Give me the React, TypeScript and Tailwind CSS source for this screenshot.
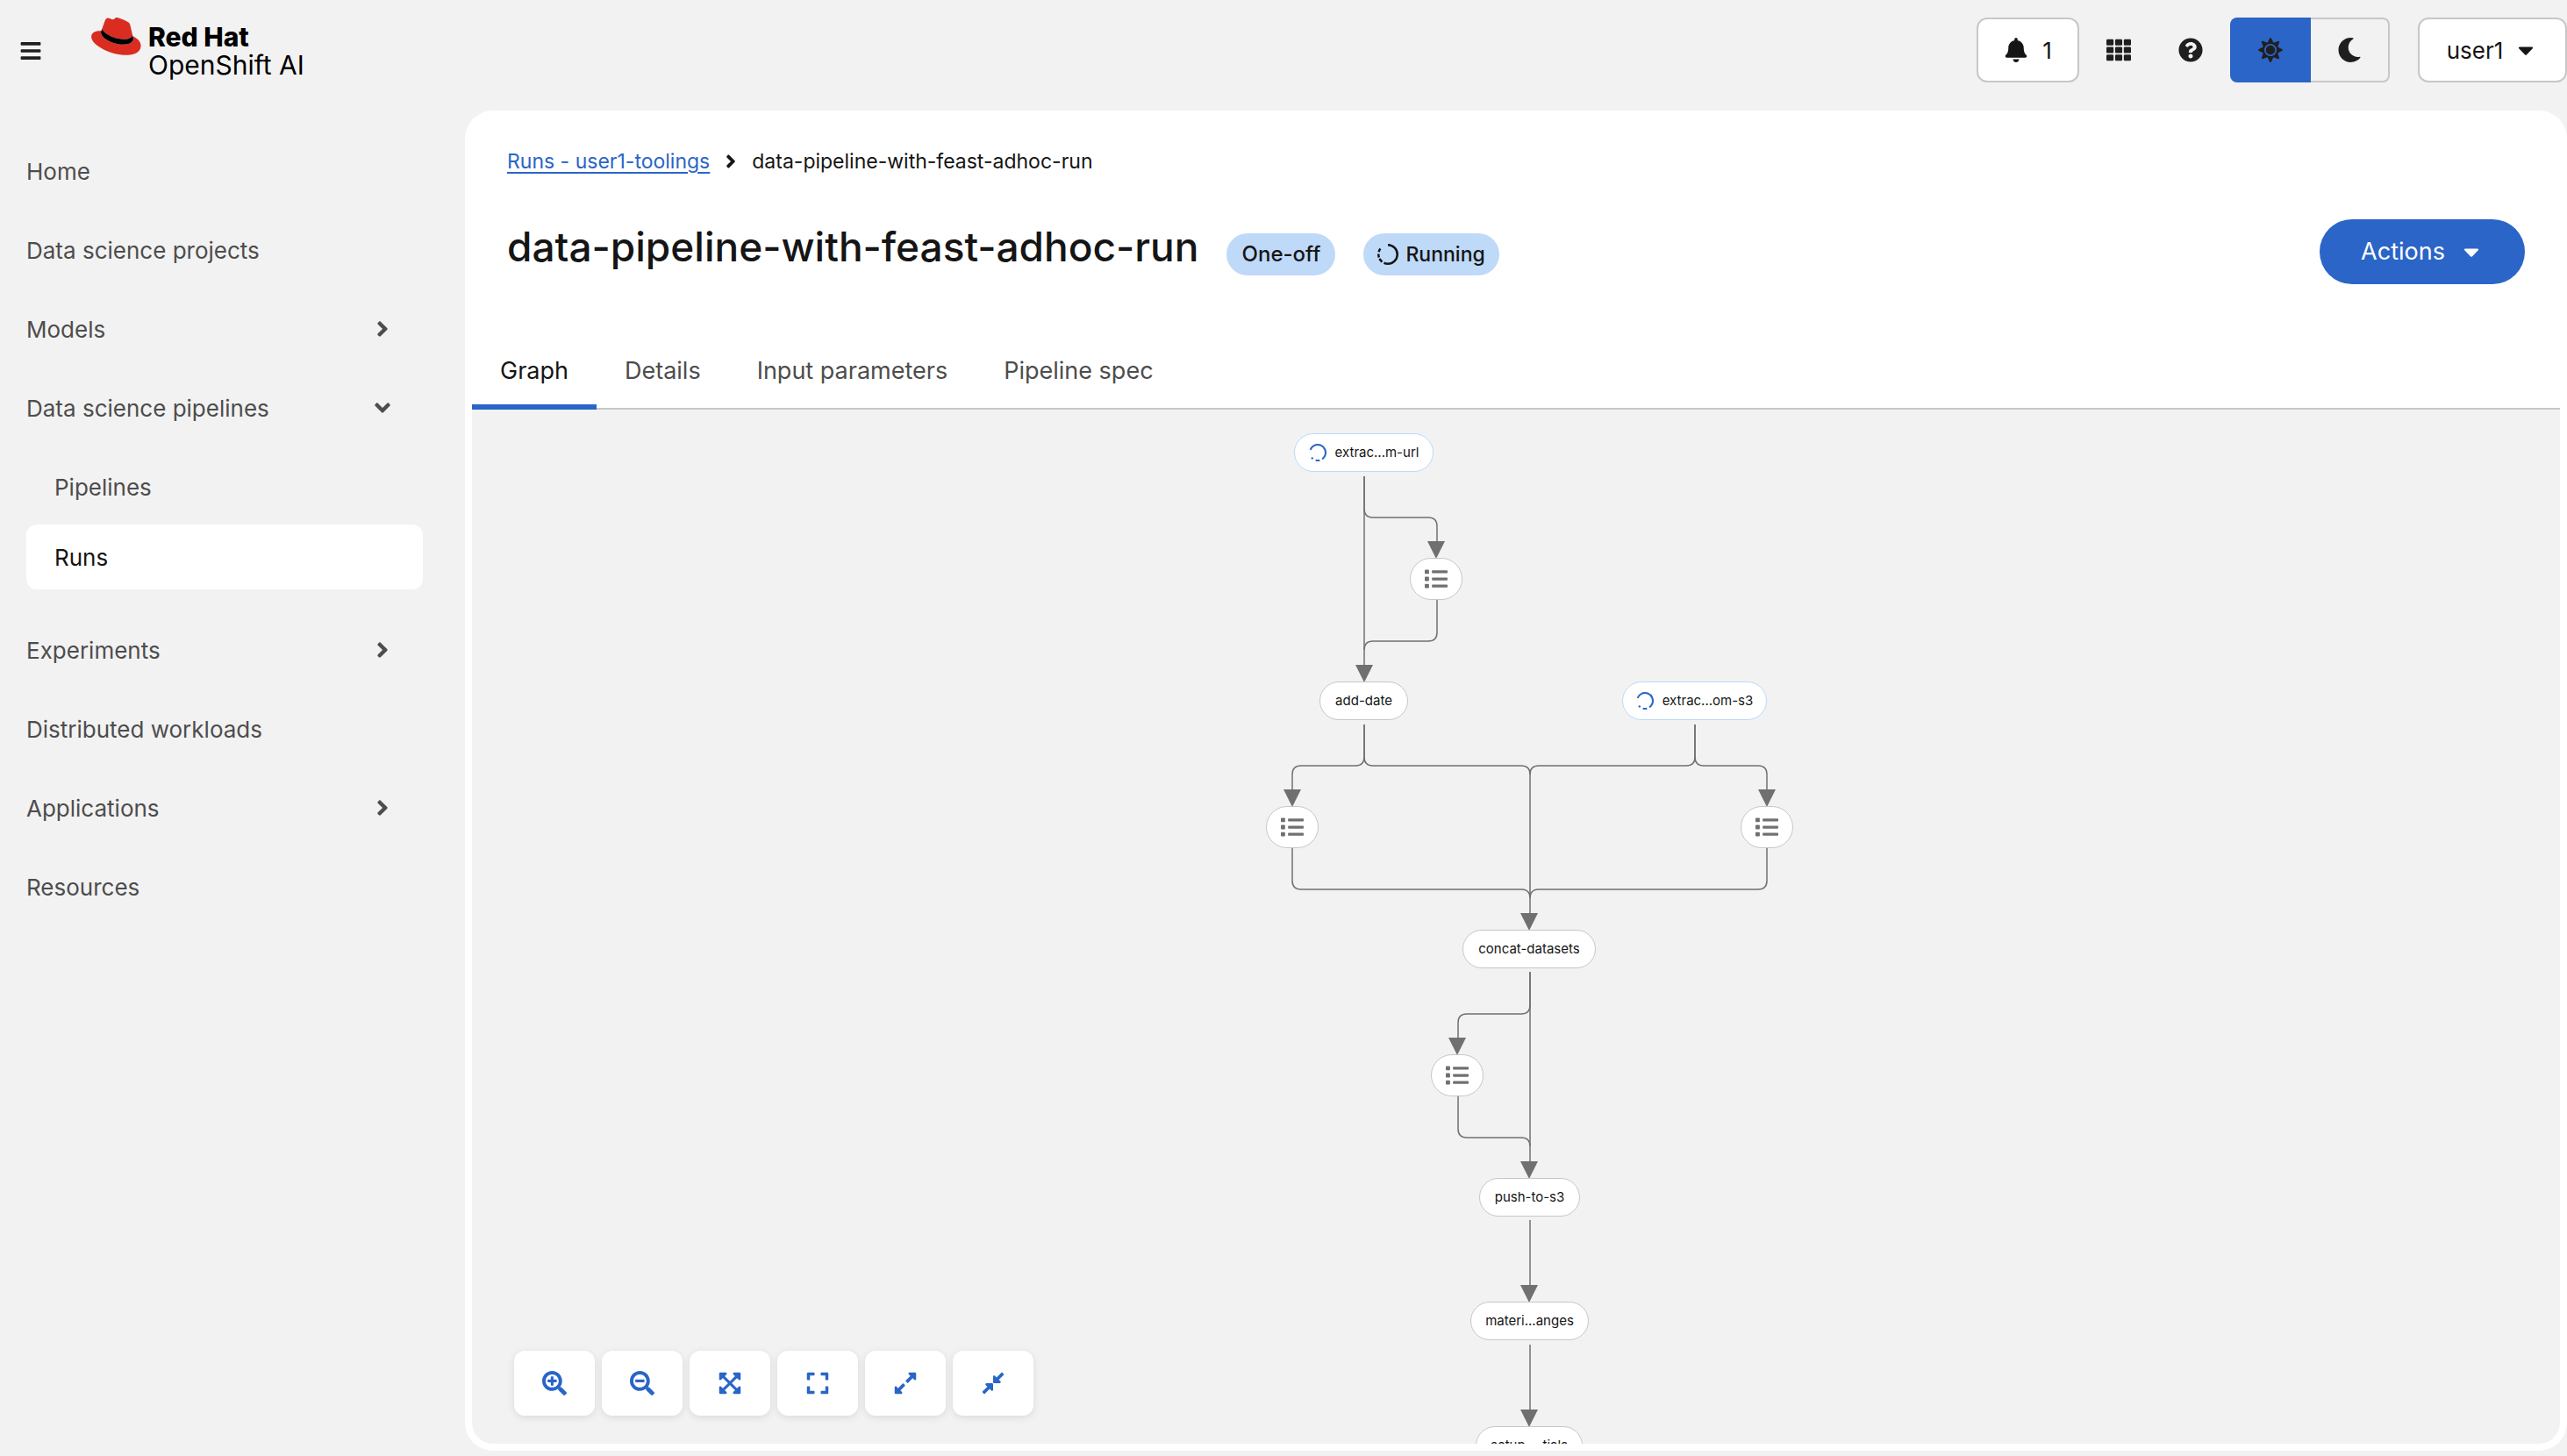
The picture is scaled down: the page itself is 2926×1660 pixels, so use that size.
import type { ReactNode } from 'react';
import {
  FaAngleDown,
  FaAngleRight,
  FaBars,
  FaBell,
  FaCaretDown,
  FaCompressAlt,
  FaExpand,
  FaExpandAlt,
  FaExpandArrowsAlt,
  FaList,
  FaMoon,
  FaQuestionCircle,
  FaSearchMinus,
  FaSearchPlus,
  FaSun,
  FaTh,
} from 'react-icons/fa';

function HatLogo() {
  return (
    <svg viewBox="0 7 192 145" className="h-[43px] w-[57px]" aria-hidden="true">
      <path
        fill="#da2c20"
        d="M127 90.2c12.5 0 30.6-2.6 30.6-17.5 0-1.2 0-2.3-.3-3.4l-7.4-32.4c-1.7-7.1-3.2-10.3-15.7-16.6-9.7-5-30.8-13.1-37.1-13.1-5.8 0-7.5 7.5-14.4 7.5-6.7 0-11.6-5.6-17.9-5.6-6 0-9.9 4.1-12.9 12.5 0 0-8.4 23.7-9.5 27.2-.2.6-.3 1.3-.2 1.9C42.2 59.9 78.6 90.2 127 90.2M159.6 78.9c1.7 8.2 1.7 9 1.7 10.1 0 14-15.7 21.8-36.4 21.8-46.8 0-87.7-27.4-87.7-45.5 0-2.8.6-5.4 1.5-7.3C21.900 58.800 .2 61.800 .2 81c0 31.5 74.6 70.3 133.6 70.3 45.3 0 56.7-20.5 56.7-36.7 0-12.700-11-27.200-30.900-35.800z"
      />
      <path
        fill="#000"
        d="M159.6 78.9c1.7 8.2 1.7 9 1.7 10.1 0 14-15.7 21.8-36.4 21.8-46.8 0-87.7-27.4-87.7-45.5 0-2.8.6-5.4 1.5-7.3l3.7-9.1c-.1.3-.2 1.2-.2 2 0 9.200 36.300 39.400 84.700 39.400 12.500 0 30.600-2.600 30.600-17.500 0-1.200 0-2.300-.3-3.400z"
      />
    </svg>
  );
}

/* Ring with a long arc and short trailing dashes; pathLength is 360 so dashes read as degrees. */
function ProgressRing({ className, dashes, turn }: { className: string; dashes: string; turn: number }) {
  return (
    <svg viewBox="0 0 24 24" className={className} aria-hidden="true">
      <circle
        cx="12"
        cy="12"
        r="10.750"
        fill="none"
        stroke="currentColor"
        strokeWidth="2.500"
        pathLength={360}
        strokeDasharray={dashes}
        transform={`rotate(${turn} 12 12)`}
      />
    </svg>
  );
}

function Masthead() {
  return (
    <header className="flex items-start justify-between pt-5 pb-8">
      <div className="flex items-start">
        <button type="button" aria-label="Global navigation" className="mt-6 ml-[22px] flex size-7 items-center text-[#1f1f1f]">
          <FaBars className="size-[26px]" />
        </button>
        <a href="#home" aria-label="Red Hat OpenShift AI" className="ml-[54px] flex items-start gap-2 text-black">
          <HatLogo />
          <span className="mt-[6px] flex flex-col text-[30px] leading-8">
            <span className="font-extrabold">Red Hat</span>
            <span>OpenShift AI</span>
          </span>
        </a>
      </div>
      <div className="flex items-center text-[#1f1f1f]">
        <button
          type="button"
          aria-label="1 notification"
          className="flex h-[74px] w-[117px] items-center justify-center gap-4 rounded-xl border-2 border-[#c7c7c7] bg-white text-[26px] text-[#151515]"
        >
          <FaBell className="size-7" />1
        </button>
        <button type="button" aria-label="Applications" className="ml-[31px] flex size-7 items-center justify-center">
          <FaTh className="size-7" />
        </button>
        <button type="button" aria-label="Help" className="ml-[54px] flex size-7 items-center justify-center">
          <FaQuestionCircle className="size-7" />
        </button>
        <div role="group" aria-label="Theme" className="ml-[31px] flex h-[74px]">
          <button type="button" aria-label="Light theme" aria-pressed="true" className="flex w-[92px] items-center justify-center rounded-l-lg bg-[#2a65c7]">
            <FaSun className="size-7" />
          </button>
          <button
            type="button"
            aria-label="Dark theme"
            aria-pressed="false"
            className="flex w-[90px] items-center justify-center rounded-r-lg border-2 border-l-0 border-[#c7c7c7]"
          >
            <FaMoon className="size-7" />
          </button>
        </div>
        <button
          type="button"
          className="ml-8 flex h-[74px] w-[170px] items-center justify-center gap-3 rounded-xl border-2 border-[#c7c7c7] bg-white text-[26px] text-[#151515]"
        >
          user1
          <FaCaretDown className="size-7" />
        </button>
      </div>
    </header>
  );
}

function NavLink({ children }: { children: ReactNode }) {
  return (
    <li>
      <a href="#nav" className="flex h-[74px] items-center">
        {children}
      </a>
    </li>
  );
}

function NavToggle({ label, open = false, children }: { label: string; open?: boolean; children?: ReactNode }) {
  return (
    <li>
      <button type="button" aria-expanded={open} className="flex h-[74px] w-full items-center justify-between pr-8 text-left">
        {label}
        {open ? <FaAngleDown className="size-7" /> : <FaAngleRight className="size-7" />}
      </button>
      {children}
    </li>
  );
}

function Sidebar() {
  return (
    <nav aria-label="Global" className="w-[530px] shrink-0 pt-8 pr-12 pl-[30px] text-[26px] text-[#4d4d4d]">
      <ul className="flex flex-col gap-4">
        <NavLink>Home</NavLink>
        <NavLink>Data science projects</NavLink>
        <NavToggle label="Models" />
        <NavToggle label="Data science pipelines" open>
          <ul className="flex flex-col gap-[6px] pt-4 pb-4">
            <li>
              <a href="#pipelines" className="flex h-[74px] items-center rounded-xl px-8">
                Pipelines
              </a>
            </li>
            <li>
              <a href="#runs" aria-current="page" className="flex h-[74px] items-center rounded-xl bg-white px-8 text-[#151515]">
                Runs
              </a>
            </li>
          </ul>
        </NavToggle>
        <NavToggle label="Experiments" />
        <NavLink>Distributed workloads</NavLink>
        <NavToggle label="Applications" />
        <NavLink>Resources</NavLink>
      </ul>
    </nav>
  );
}

const edges = [
  'M147 76V291',
  'M147 76V113Q147 123 157 123H220Q230 123 230 133V151',
  'M230 217V254Q230 264 220 264H157Q147 264 147 274',
  'M147 359V396Q147 406 137 406H75Q65 406 65 416V434',
  'M147 359V396Q147 406 157 406H326Q336 406 336 416V575',
  'M524 359V396Q524 406 514 406H346Q336 406 336 416',
  'M524 359V396Q524 406 534 406H596Q606 406 606 416V434',
  'M65 500V537Q65 547 75 547H326Q336 547 336 557',
  'M606 500V537Q606 547 596 547H346Q336 547 336 557',
  'M336 641V857',
  'M336 641V679Q336 689 326 689H264Q254 689 254 699V717',
  'M254 783V820Q254 830 264 830H326Q336 830 336 840',
  'M336 924V998',
  'M336 1066V1140',
];

/* Tip of each arrow head. */
const arrows = [
  [229, 169],
  [147, 310],
  [65, 452],
  [606, 452],
  [335, 593],
  [253, 735],
  [335, 876],
  [335, 1017],
  [335, 1159],
];

const tasks = [
  { label: 'extrac...m-url', left: 67, top: 27, width: 159, running: true },
  { label: 'add-date', left: 96, top: 310, width: 101, running: false },
  { label: 'extrac...om-s3', left: 441, top: 310, width: 165, running: true },
  { label: 'concat-datasets', left: 259, top: 593, width: 152, running: false },
  { label: 'push-to-s3', left: 278, top: 876, width: 115, running: false },
  { label: 'materi...anges', left: 268, top: 1017, width: 135, running: false },
  { label: 'setup-...tials', left: 274, top: 1159, width: 122, running: false },
];

const artifacts = [
  [199, 169],
  [35, 452],
  [576, 452],
  [223, 735],
];

function Graph() {
  return (
    <div className="relative mx-auto h-[1210px] w-[640px]">
      <svg viewBox="0 0 640 1210" className="absolute inset-0 size-full" aria-hidden="true">
        <g fill="none" stroke="#707070" strokeWidth="1.500">
          {edges.map((d) => (
            <path key={d} d={d} />
          ))}
        </g>
        {arrows.map(([x, y]) => (
          <path key={`${x}-${y}`} d={`M${x - 10} ${y - 19}h20l-10 20z`} fill="#707070" />
        ))}
      </svg>
      {tasks.map((t) => (
        <button
          type="button"
          key={t.label}
          style={{ left: t.left, top: t.top, width: t.width }}
          className={
            t.running
              ? 'absolute flex h-11 items-center justify-center gap-[10px] rounded-full border border-[#b9dafc] bg-white text-[15px] text-[#151515]'
              : 'absolute flex h-11 items-center justify-center rounded-full border border-[#c7c7c7] bg-white text-[15px] text-[#151515]'
          }
        >
          {t.running && <ProgressRing className="size-5 text-[#2a65c7]" dashes="215 20 30 22 14 59" turn={-160} />}
          {t.label}
        </button>
      ))}
      {artifacts.map(([x, y]) => (
        <button
          type="button"
          key={`${x}-${y}`}
          aria-label="Artifact"
          style={{ left: x, top: y }}
          className="absolute flex h-12 w-[60px] items-center justify-center rounded-full border border-[#c7c7c7] bg-white text-[#707070]"
        >
          <FaList className="size-[26px]" />
        </button>
      ))}
    </div>
  );
}

const controls = [
  { label: 'Zoom in', icon: <FaSearchPlus className="size-7" /> },
  { label: 'Zoom out', icon: <FaSearchMinus className="size-7" /> },
  { label: 'Fit to screen', icon: <FaExpandArrowsAlt className="size-7" /> },
  { label: 'Reset view', icon: <FaExpand className="size-7" /> },
  { label: 'Expand all', icon: <FaExpandAlt className="size-7" /> },
  { label: 'Collapse all', icon: <FaCompressAlt className="size-7" /> },
];

const tabs = ['Graph', 'Details', 'Input parameters', 'Pipeline spec'];

export default function App() {
  return (
    <div className="flex h-screen flex-col bg-[#f2f2f2] font-['Inter',sans-serif] text-[#151515]">
      <Masthead />
      <div className="flex min-h-0 flex-1">
        <Sidebar />
        <main className="mb-[6px] flex min-w-0 flex-1 flex-col overflow-hidden rounded-[32px] bg-white px-2 pb-2">
          <div className="px-10 pt-10">
            <nav aria-label="Breadcrumb" className="flex h-9 items-center text-[23px]">
              <a href="#runs" className="text-[#2a65c7] underline underline-offset-4">
                Runs - user1-toolings
              </a>
              <FaAngleRight className="mx-3 size-6" />
              <span>data-pipeline-with-feast-adhoc-run</span>
            </nav>
            <div className="mt-12 flex items-start">
              <h1 className="text-[46px] leading-[62px] font-medium">data-pipeline-with-feast-adhoc-run</h1>
              <span className="mt-4 ml-8 flex h-12 w-[124px] items-center justify-center rounded-full bg-[#bfd9f8] text-[24px] font-medium">
                One-off
              </span>
              <span className="mt-4 ml-8 flex h-12 items-center gap-2 rounded-full bg-[#bfd9f8] px-4 text-[23px] font-medium">
                <ProgressRing className="size-6" dashes="205 12 26 8 22 12 22 53" turn={-90} />
                Running
              </span>
              <button type="button" className="mr-0 ml-auto flex h-[74px] w-[234px] items-center justify-center gap-4 rounded-full bg-[#2a65c7] text-[27px] text-white">
                Actions
                <FaCaretDown className="size-7" />
              </button>
            </div>
          </div>
          <div role="tablist" className="mt-14 flex h-[87px] shrink-0 text-[27px] shadow-[inset_0_-2px_0_#c7c7c7]">
            {tabs.map((tab, i) => (
              <button
                type="button"
                role="tab"
                key={tab}
                aria-selected={i === 0}
                className={i === 0 ? 'px-8 shadow-[inset_0_-6px_0_#2a65c7]' : 'px-8 text-[#4d4d4d]'}
              >
                {tab}
              </button>
            ))}
          </div>
          <section aria-label="Run graph" className="relative min-h-0 flex-1 overflow-hidden rounded-b-3xl bg-[#f2f2f2]">
            <Graph />
            <div className="absolute bottom-8 left-12 flex gap-2">
              {controls.map((c) => (
                <button
                  type="button"
                  key={c.label}
                  aria-label={c.label}
                  className="flex h-[74px] w-[92px] items-center justify-center rounded-xl bg-white text-[#2a65c7] shadow-[0_2px_8px_rgba(0,0,0,0.1)]"
                >
                  {c.icon}
                </button>
              ))}
            </div>
          </section>
        </main>
      </div>
    </div>
  );
}
